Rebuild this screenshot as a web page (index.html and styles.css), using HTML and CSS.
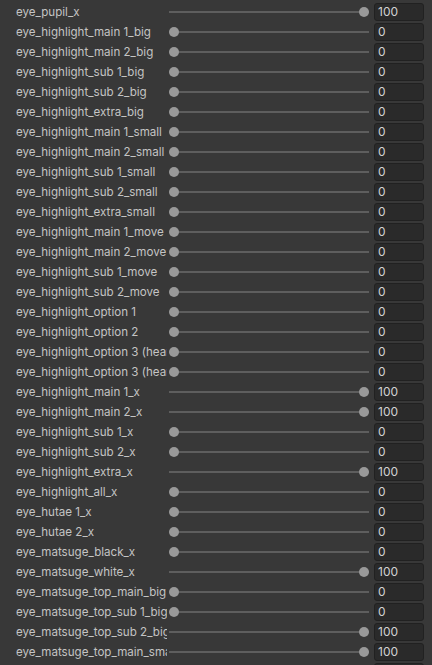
FILE: index.html
```html
<!DOCTYPE html>
<html lang="en">
<head>
    <meta charset="utf-8" />
    <meta name="viewport" content="width=device-width, initial-scale=1.0" />
    <link rel="stylesheet" href="styles.css">
    <title>Blend Shapes</title>
</head>
<body>
    <div class="list" id="list"></div>

    <script>
        // blend shape name / weight pairs, in inspector order
        let shapes = [
            ["eye_pupil_x", 100],
            ["eye_highlight_main 1_big", 0],
            ["eye_highlight_main 2_big", 0],
            ["eye_highlight_sub 1_big", 0],
            ["eye_highlight_sub 2_big", 0],
            ["eye_highlight_extra_big", 0],
            ["eye_highlight_main 1_small", 0],
            ["eye_highlight_main 2_small", 0],
            ["eye_highlight_sub 1_small", 0],
            ["eye_highlight_sub 2_small", 0],
            ["eye_highlight_extra_small", 0],
            ["eye_highlight_main 1_move", 0],
            ["eye_highlight_main 2_move", 0],
            ["eye_highlight_sub 1_move", 0],
            ["eye_highlight_sub 2_move", 0],
            ["eye_highlight_option 1", 0],
            ["eye_highlight_option 2", 0],
            ["eye_highlight_option 3 (heart)", 0],
            ["eye_highlight_option 3 (heart)_x", 0],
            ["eye_highlight_main 1_x", 100],
            ["eye_highlight_main 2_x", 100],
            ["eye_highlight_sub 1_x", 0],
            ["eye_highlight_sub 2_x", 0],
            ["eye_highlight_extra_x", 100],
            ["eye_highlight_all_x", 0],
            ["eye_hutae 1_x", 0],
            ["eye_hutae 2_x", 0],
            ["eye_matsuge_black_x", 0],
            ["eye_matsuge_white_x", 100],
            ["eye_matsuge_top_main_big", 0],
            ["eye_matsuge_top_sub 1_big", 0],
            ["eye_matsuge_top_sub 2_big", 100],
            ["eye_matsuge_top_main_small", 100],
            ["eye_matsuge_top_sub 1_small", 0]
        ];

        let list = document.getElementById("list");
        shapes.forEach(function(s) {
            let row = document.createElement("div");
            row.className = "row";
            row.innerHTML =
                '<div class="label">' + s[0] + '</div>' +
                '<div class="slider"><div class="track"></div>' +
                '<div class="thumb" style="left:' + (s[1] * 1.9) + 'px"></div></div>' +
                '<div class="field">' + s[1] + '</div>';
            list.appendChild(row);
        });
    </script>
</body>
</html>
```

FILE: styles.css
```css
html, body {
    height: 100%;
    overflow: hidden;
}

body {
    margin: 0;
    background-color: #383838;
    font-family: 'Inter', 'Noto Sans', sans-serif;
    font-size: 11.6px;
    color: #c4c4c4;
}

.list {
    padding: 2px 8px 0 16px;
}

.row {
    display: flex;
    align-items: center;
    height: 20px;
}

.label {
    width: 151px;
    flex: none;
    white-space: nowrap;
    overflow: hidden;
    line-height: 20px;
}

.slider {
    position: relative;
    width: 200px;
    height: 20px;
    margin: 0 5px 0 2px;
    flex: none;
}

.track {
    position: absolute;
    left: 0;
    right: 0;
    top: 9px;
    height: 2px;
    background-color: #5e5e5e;
}

.thumb {
    position: absolute;
    top: 5px;
    width: 10px;
    height: 10px;
    border-radius: 50%;
    background-color: #999999;
}

.field {
    width: 50px;
    height: 18px;
    box-sizing: border-box;
    flex: none;
    background-color: #2a2a2a;
    border: 1px solid #212121;
    border-radius: 3px;
    padding-left: 3px;
    line-height: 16px;
    font-size: 12px;
    color: #d2d2d2;
}
```
